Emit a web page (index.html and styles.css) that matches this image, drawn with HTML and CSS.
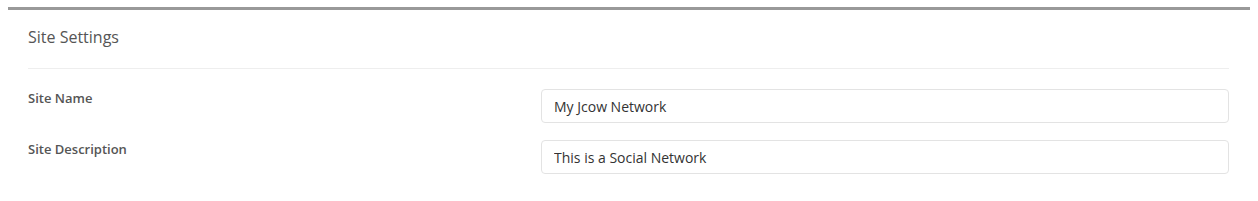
FILE: index.html
```html
<!DOCTYPE html>
<html lang="en">
<head>
    <meta charset="UTF-8">
    <title>Site Settings</title>
    <link rel="stylesheet" href="styles.css">
</head>
<body>
    <div class="panel">
        <div class="panel-heading">Site Settings</div>

        <!-- Settings form -->
        <form class="settings">
            <div class="row">
                <label for="siteName">Site Name</label>
                <input type="text" id="siteName" value="My Jcow Network">
            </div>
            <div class="row">
                <label for="siteDesc">Site Description</label>
                <input type="text" id="siteDesc" value="This is a Social Network">
            </div>
        </form>
    </div>
</body>
</html>
```

FILE: styles.css
```css
body {
    font-family: "Open Sans", Arial, sans-serif;
    margin: 7px 8px 0 8px;
    background-color: #fff;
    color: #555;
}
.panel {
    border-top: 3px solid #999;
    padding: 0 21px 0 20px;
}
.panel-heading {
    font-size: 16px;
    font-weight: 500;
    line-height: 22px;
    padding: 16px 0 20px 0;
    border-bottom: 1px solid #eee;
    color: #555;
}
.settings {
    padding-top: 20px;
}
.row {
    display: grid;
    grid-template-columns: 513px 1fr;
    margin-bottom: 17px;
}
label {
    font-size: 13px;
    font-weight: 600;
    line-height: 18px;
    color: #555;
}
input[type="text"] {
    height: 34px;
    box-sizing: border-box;
    padding: 6px 12px;
    font-family: "Open Sans", Arial, sans-serif;
    font-size: 14px;
    color: #333;
    border: 1px solid #e3e3e3;
    border-radius: 4px;
    background-color: #fff;
}
```
